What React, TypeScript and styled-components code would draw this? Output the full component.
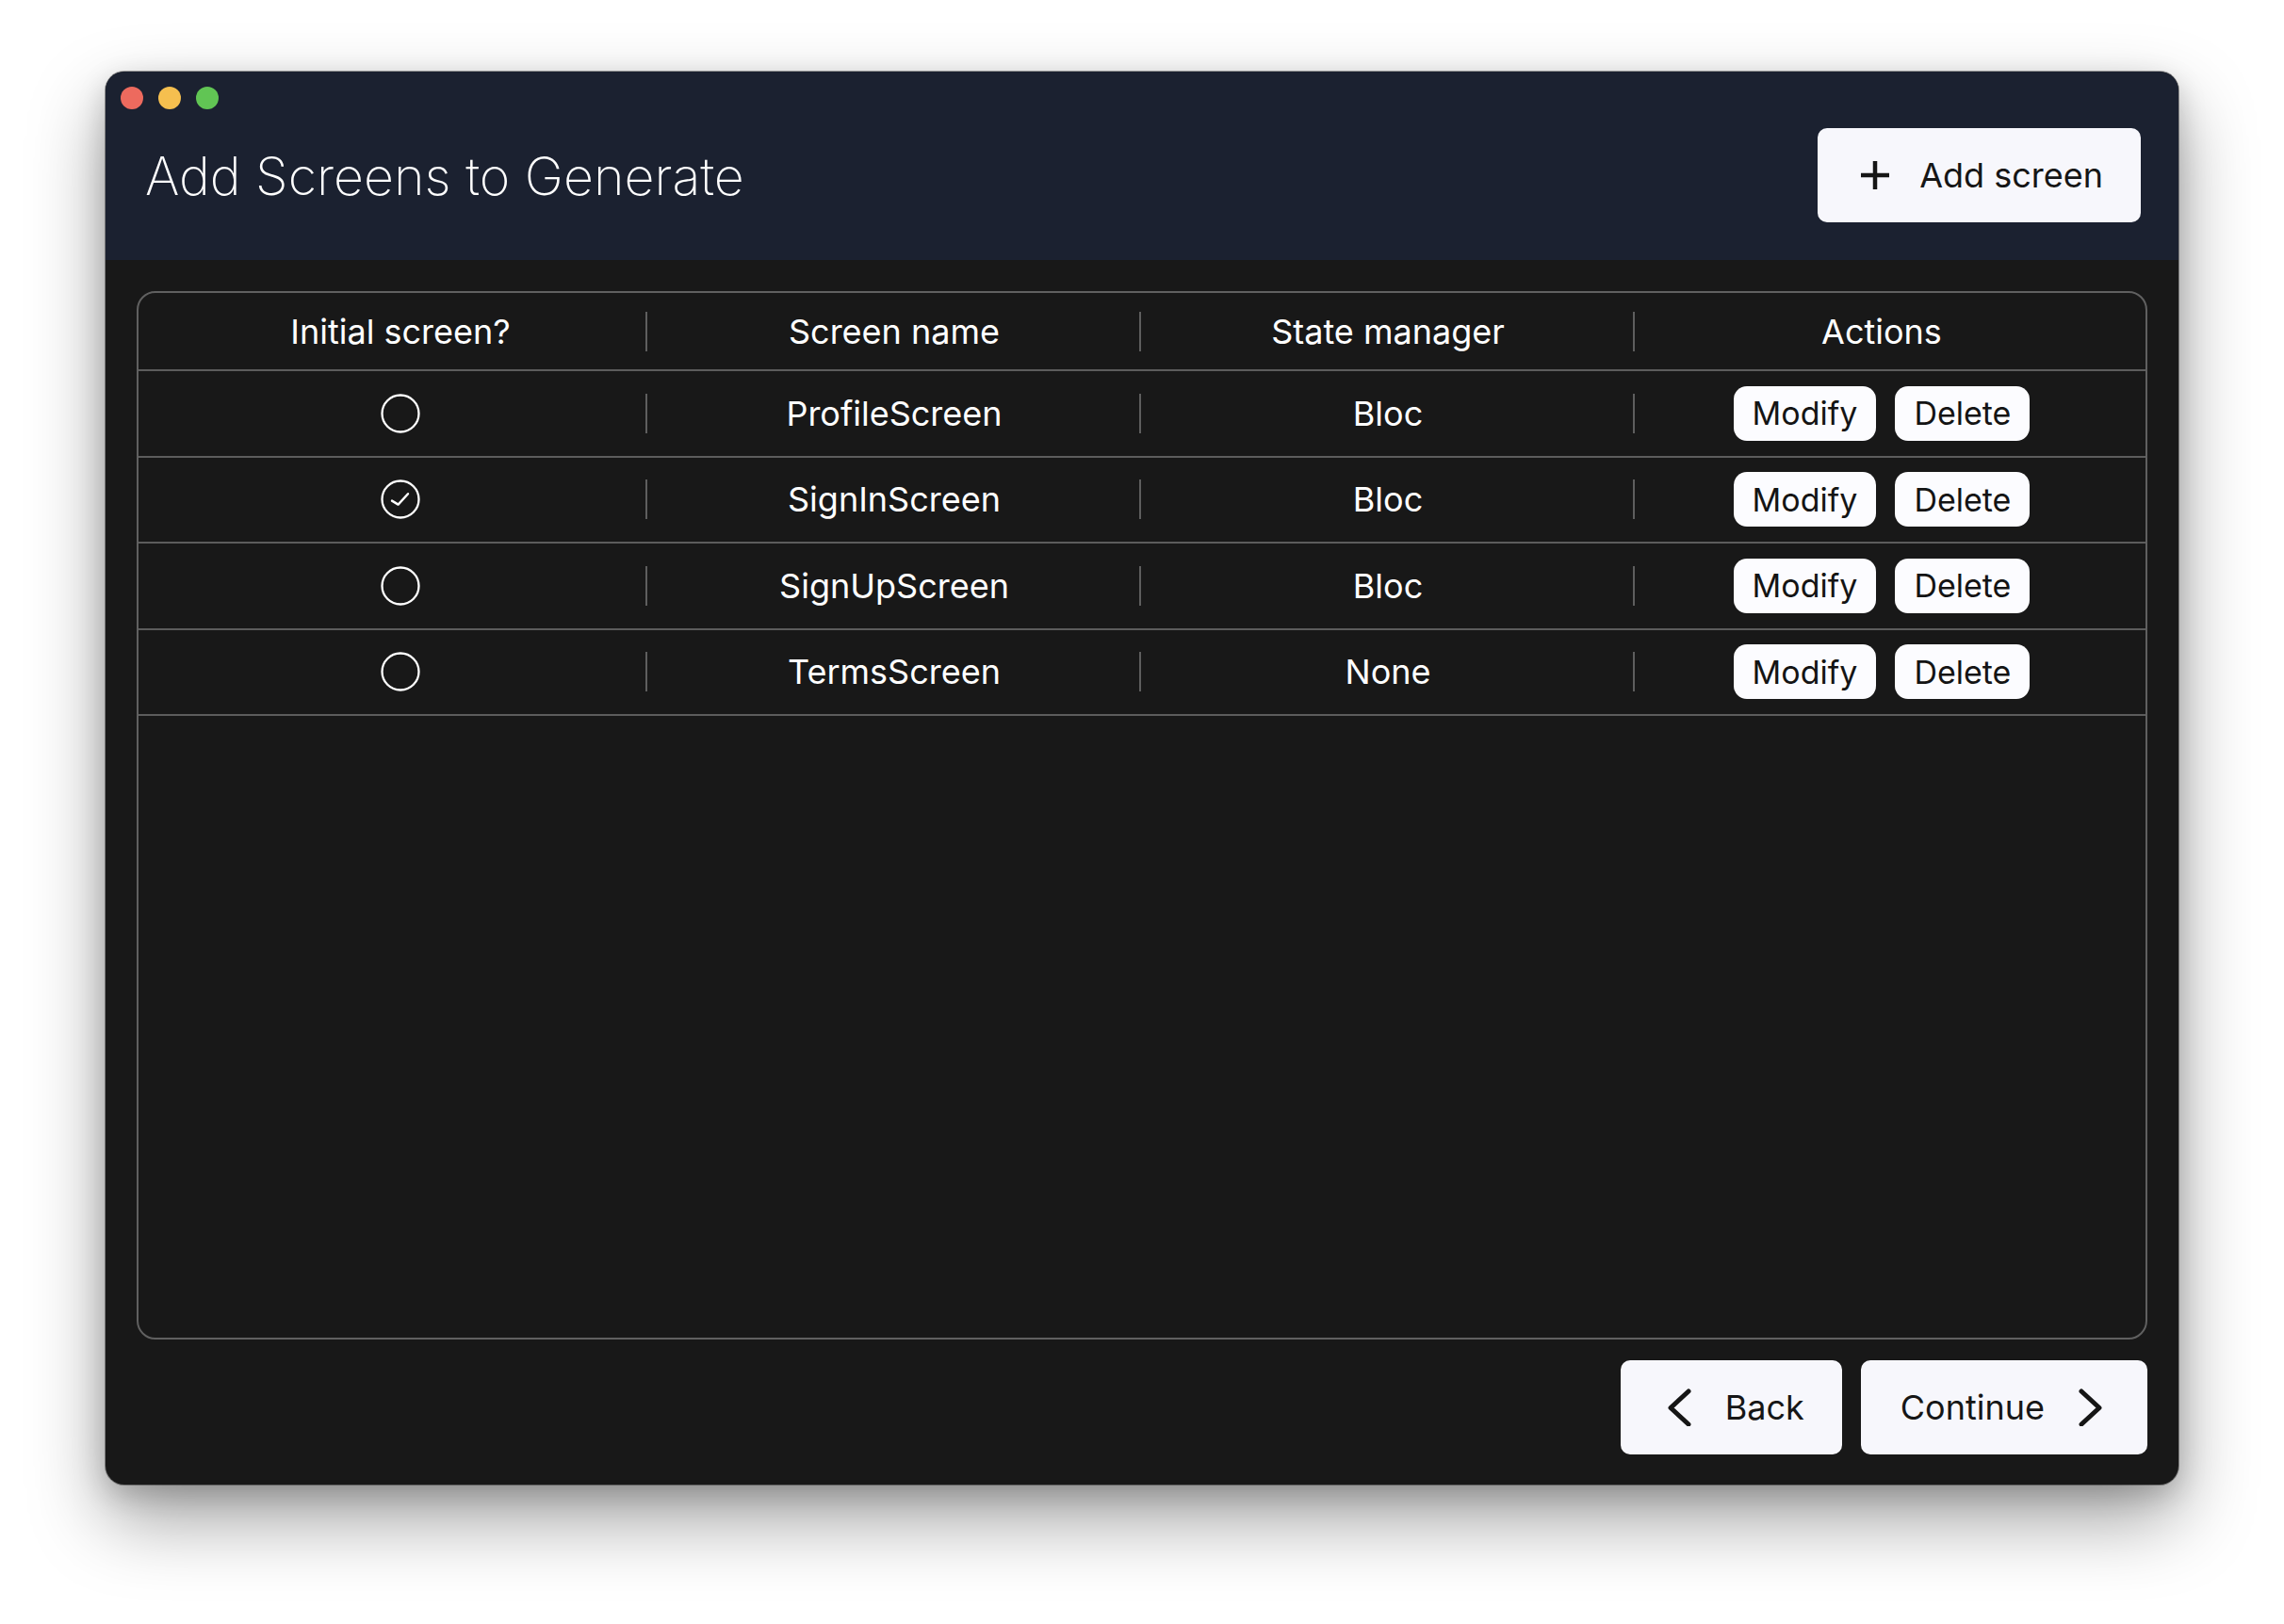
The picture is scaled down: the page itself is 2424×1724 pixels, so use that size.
import React from 'react'
import styled, { createGlobalStyle } from 'styled-components'

type ScreenRow = {
  name: string
  manager: string
  initial: boolean
}

const screens: ScreenRow[] = [
  { name: 'ProfileScreen', manager: 'Bloc', initial: false },
  { name: 'SignInScreen', manager: 'Bloc', initial: true },
  { name: 'SignUpScreen', manager: 'Bloc', initial: false },
  { name: 'TermsScreen', manager: 'None', initial: false },
]

const columns = ['Initial screen?', 'Screen name', 'State manager', 'Actions']

const PlusIcon = () => (
  <svg width="30" height="30" viewBox="0 0 30 30">
    <path d="M15 0V30M0 15H30" stroke="#161616" strokeWidth="4.5" fill="none" />
  </svg>
)

const Chevron = ({ dir }: { dir: 'left' | 'right' }) => (
  <svg width="26" height="40" viewBox="0 0 26 40">
    <path
      d={dir === 'left' ? 'M22 3L3 20.5L22 38' : 'M4 3L23 20.5L4 38'}
      stroke="#161616"
      strokeWidth="5"
      strokeLinecap="round"
      strokeLinejoin="round"
      fill="none"
    />
  </svg>
)

const RadioMark = ({ checked }: { checked: boolean }) => (
  <svg width="44" height="44" viewBox="0 0 44 44">
    <circle cx="22" cy="22" r="19.5" stroke="#fff" strokeWidth="2.3" fill="none" />
    {checked && (
      <path
        d="M13 23.6L19.6 27.6L30 16.2"
        stroke="#fff"
        strokeWidth="2.4"
        strokeLinecap="round"
        strokeLinejoin="round"
        fill="none"
      />
    )}
  </svg>
)

const App = () => {
  return (
    <>
      <GlobalStyle />
      <Page>
        <Window>
          <TitleBar>
            <Lights>
              <Light $color="#ed6a5e" />
              <Light $color="#f5bf4f" />
              <Light $color="#61c554" />
            </Lights>
            <Title>Add Screens to Generate</Title>
            <Button $icon="plus">
              <PlusIcon />
              Add screen
            </Button>
          </TitleBar>
          <Body>
            <Table>
              <Row $head>
                {columns.map((c) => (
                  <Cell key={c}>{c}</Cell>
                ))}
              </Row>
              {screens.map((s) => (
                <Row key={s.name}>
                  <Cell>
                    <RadioMark checked={s.initial} />
                  </Cell>
                  <Cell>{s.name}</Cell>
                  <Cell>{s.manager}</Cell>
                  <Cell>
                    <Actions>
                      <SmallButton>Modify</SmallButton>
                      <SmallButton>Delete</SmallButton>
                    </Actions>
                  </Cell>
                </Row>
              ))}
            </Table>
            <Footer>
              <Button $icon="left">
                <Chevron dir="left" />
                Back
              </Button>
              <Button $icon="right">
                Continue
                <Chevron dir="right" />
              </Button>
            </Footer>
          </Body>
        </Window>
      </Page>
    </>
  )
}

const GlobalStyle = createGlobalStyle`
  body {
    margin: 0;
    background: #ffffff;
    font-family: Inter, 'Liberation Sans', sans-serif;
  }
`

const Page = styled.div`
  width: 2424px;
  height: 1724px;
  box-sizing: border-box;
  padding: 76px 112px 148px;
  background: #ffffff;
`

const Window = styled.div`
  width: 2200px;
  height: 1500px;
  display: flex;
  flex-direction: column;
  border-radius: 20px;
  overflow: hidden;
  background: #181818;
  box-shadow: 0 0 0 1px rgba(0, 0, 0, 0.35), 0 36px 80px rgba(0, 0, 0, 0.38),
    0 10px 30px rgba(0, 0, 0, 0.18);
`

const TitleBar = styled.header`
  position: relative;
  height: 200px;
  flex-shrink: 0;
  box-sizing: border-box;
  padding: 20px 40px 0 42px;
  display: flex;
  align-items: center;
  justify-content: space-between;
  background: #1b2130;
`

const Lights = styled.div`
  position: absolute;
  top: 16px;
  left: 16px;
  display: flex;
  gap: 16px;
`

const Light = styled.span<{ $color: string }>`
  width: 24px;
  height: 24px;
  border-radius: 50%;
  background: ${(p) => p.$color};
`

const Title = styled.h1`
  margin: 0;
  font-size: 55.5px;
  font-weight: 200;
  color: #ffffff;
  letter-spacing: 0;
`

const buttonPadding = {
  plus: '0 40px 0 46px',
  left: '0 40px 0 50px',
  right: '0 48px 0 42px',
}

const Button = styled.button<{ $icon: 'plus' | 'left' | 'right' }>`
  height: 100px;
  box-sizing: border-box;
  display: flex;
  align-items: center;
  gap: ${(p) => (p.$icon === 'plus' ? '32px' : '35px')};
  padding: ${(p) => buttonPadding[p.$icon]};
  border: none;
  border-radius: 10px;
  background: #f7f7fc;
  color: #161616;
  font-family: inherit;
  font-size: 36px;
  font-weight: 400;
  cursor: pointer;
`

const Body = styled.main`
  flex: 1;
  display: flex;
  flex-direction: column;
  padding: 33px 33px 32px 33px;
  gap: 22px;
  min-height: 0;
`

const Table = styled.section`
  flex: 1;
  border: 2px solid #606060;
  border-radius: 20px;
  overflow: hidden;
`

const Row = styled.div<{ $head?: boolean }>`
  display: grid;
  grid-template-columns: repeat(4, 1fr);
  height: ${(p) => (p.$head ? '81px' : '89.5px')};
  padding: 0 18px 0 16px;
  border-bottom: 2px solid #5c5c5c;
`

const Cell = styled.div`
  position: relative;
  display: flex;
  align-items: center;
  justify-content: center;
  color: #ffffff;
  font-size: 36px;
  font-weight: 400;

  &:not(:first-child)::before {
    content: '';
    position: absolute;
    left: -2px;
    top: 50%;
    width: 2px;
    height: 42px;
    margin-top: -21px;
    background: #5e5e5e;
  }
`

const Actions = styled.div`
  display: flex;
  gap: 20px;
`

const SmallButton = styled.button`
  height: 58px;
  padding: 0 20px;
  border: none;
  border-radius: 14px;
  background: #fcfcff;
  color: #141414;
  font-family: inherit;
  font-size: 34px;
  cursor: pointer;
`

const Footer = styled.footer`
  display: flex;
  justify-content: flex-end;
  gap: 20px;
`

export default App
